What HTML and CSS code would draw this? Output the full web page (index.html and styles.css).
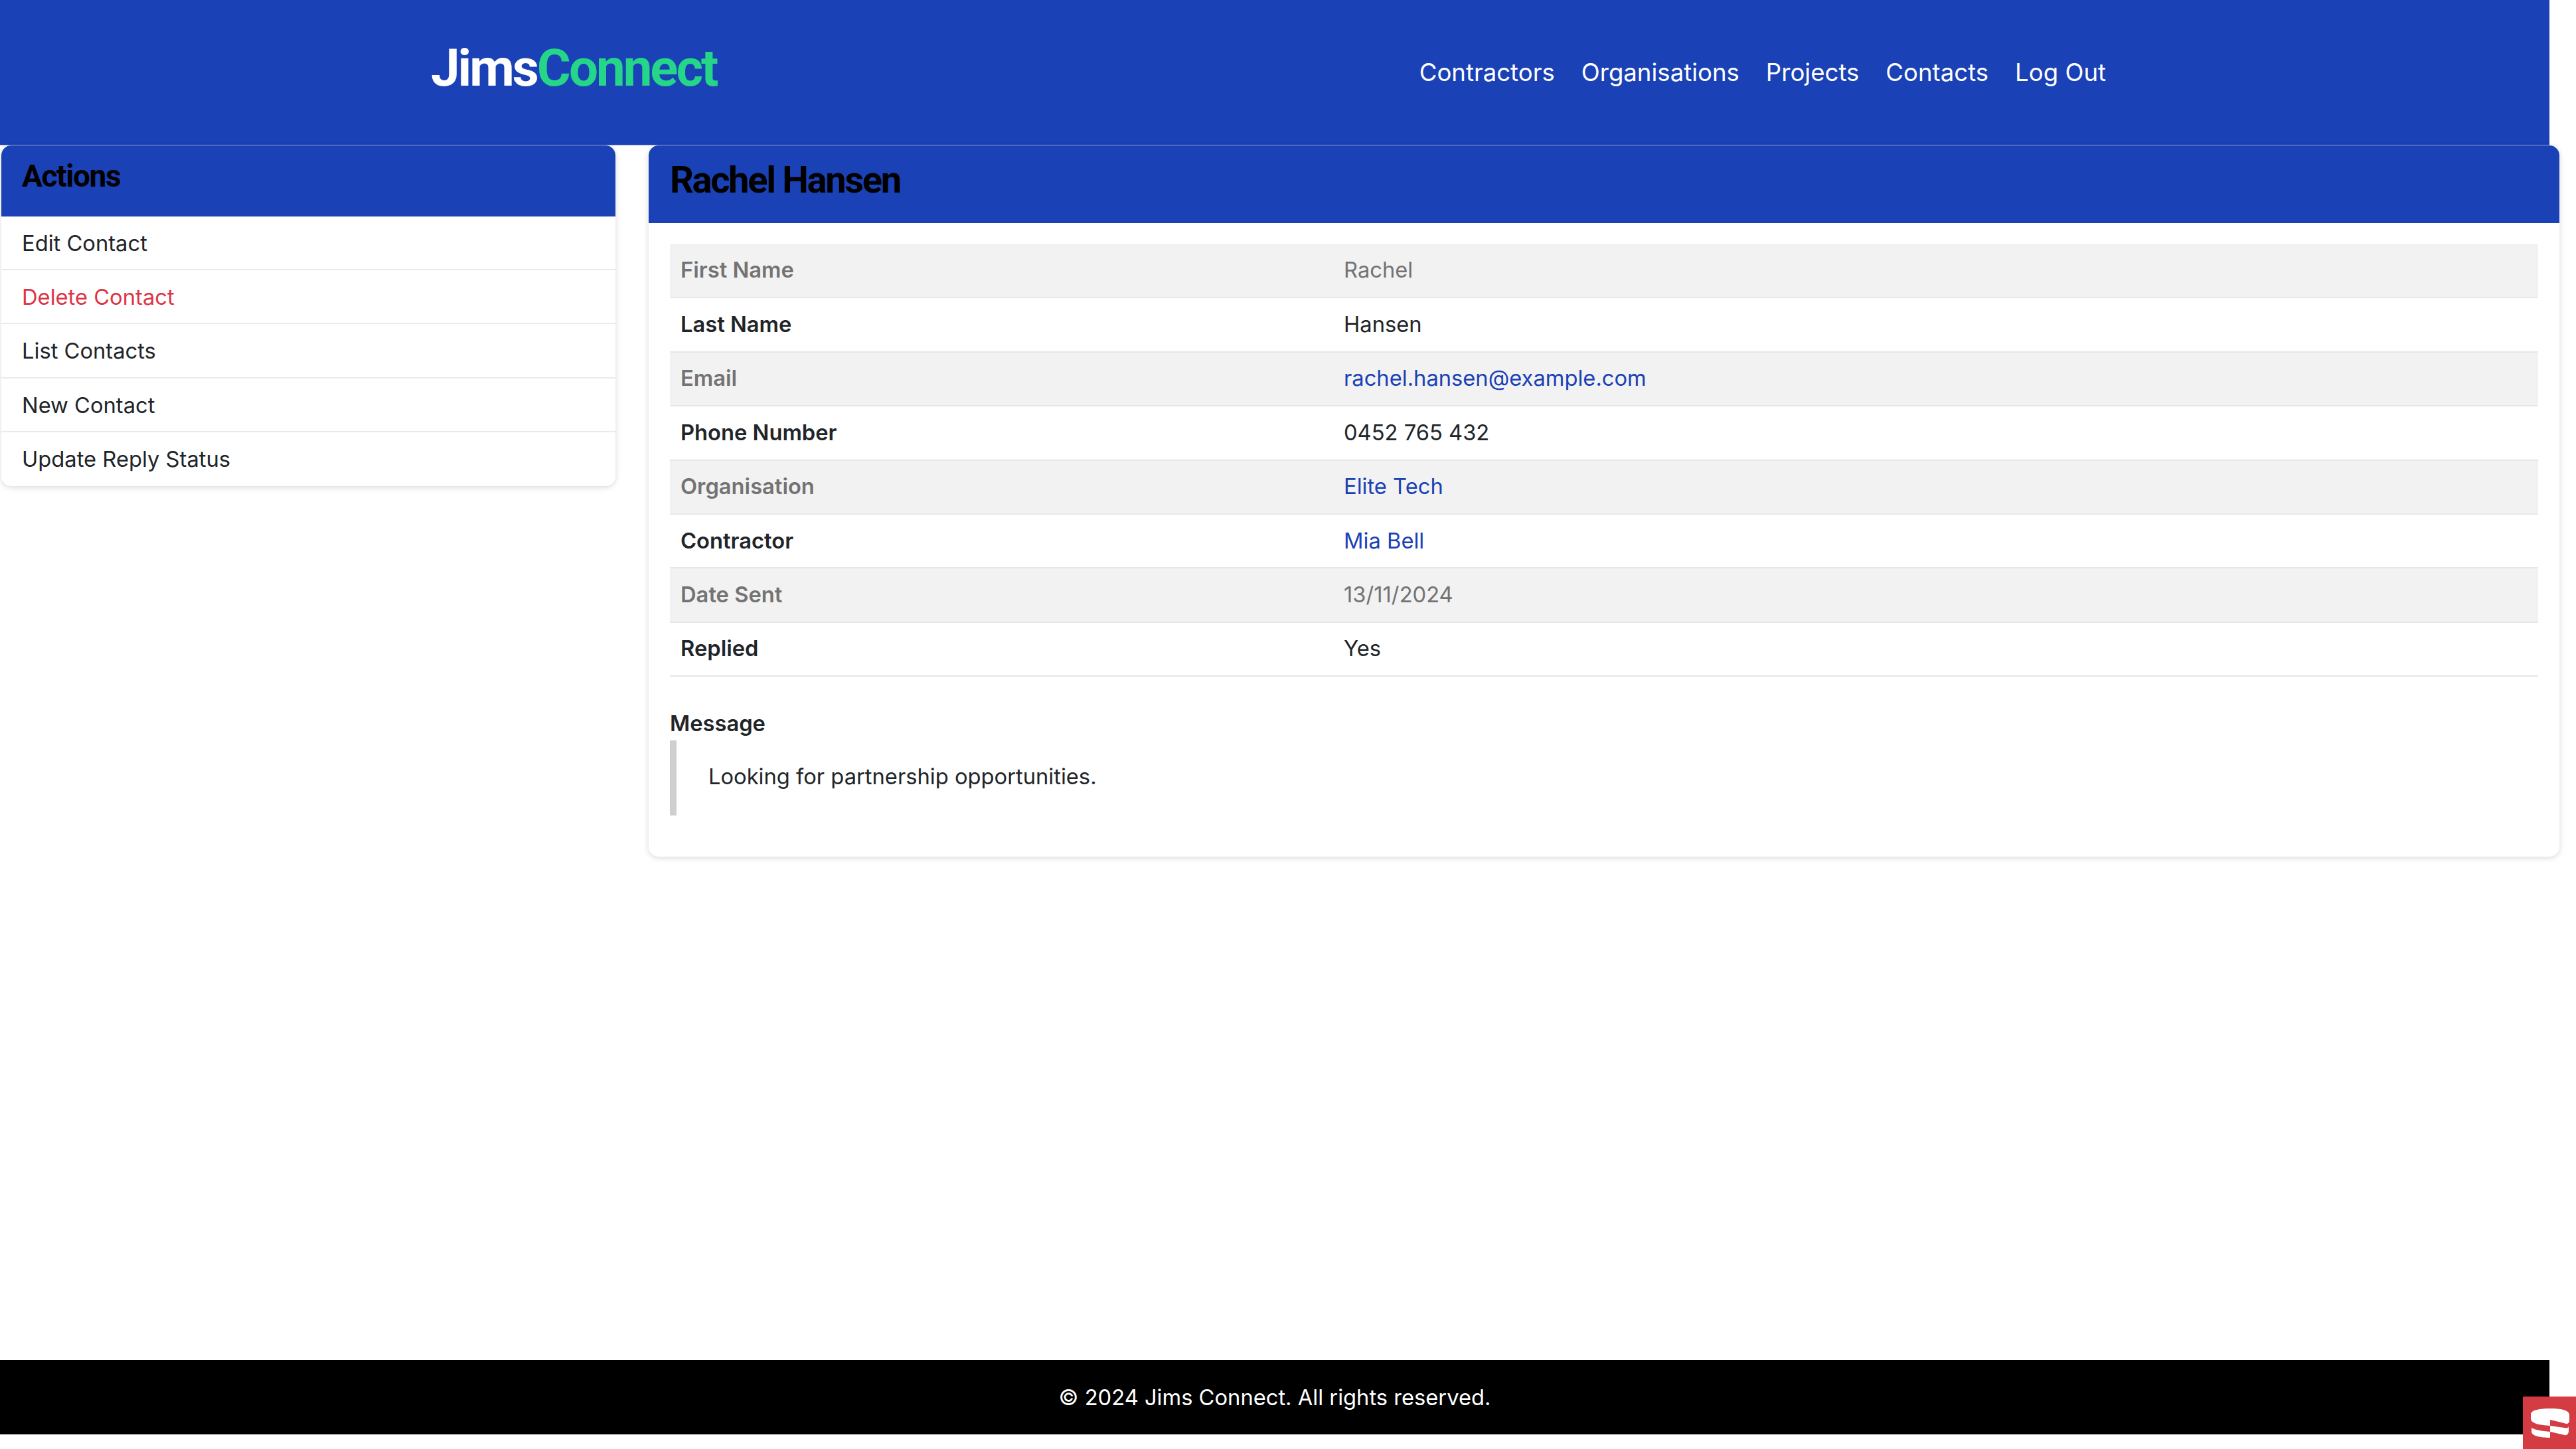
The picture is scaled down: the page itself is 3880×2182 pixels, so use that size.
FILE: index.html
```html
<!DOCTYPE html>

<html lang="en">
    <head>
        <title>Rachel Hansen - Jims Connect</title>

        <link rel="stylesheet" href="styles.css">
    </head>

    <body>
        <header class="top-bar">
            <div class="top-inner">
                <a class="logo"><span class="logo-jims">Jims</span><span class="logo-connect">Connect</span></a>
                <nav class="top-nav">
                    <a>Contractors</a>
                    <a>Organisations</a>
                    <a>Projects</a>
                    <a>Contacts</a>
                    <a>Log Out</a>
                </nav>
            </div>
        </header>

        <main class="layout">
            <aside class="card side-card">
                <h4 class="side-title">Actions</h4>
                <ul class="side-list">
                    <li>Edit Contact</li>
                    <li class="danger">Delete Contact</li>
                    <li>List Contacts</li>
                    <li>New Contact</li>
                    <li>Update Reply Status</li>
                </ul>
            </aside>

            <section class="card detail-card">
                <h3 class="detail-title">Rachel Hansen</h3>
                <div class="detail-body">
                    <table class="detail-table">
                        <tr><th>First Name</th><td>Rachel</td></tr>
                        <tr><th>Last Name</th><td>Hansen</td></tr>
                        <tr><th>Email</th><td><a>rachel.hansen@example.com</a></td></tr>
                        <tr><th>Phone Number</th><td>0452 765 432</td></tr>
                        <tr><th>Organisation</th><td><a>Elite Tech</a></td></tr>
                        <tr><th>Contractor</th><td><a>Mia Bell</a></td></tr>
                        <tr><th>Date Sent</th><td>13/11/2024</td></tr>
                        <tr><th>Replied</th><td>Yes</td></tr>
                    </table>

                    <div class="message">
                        <strong>Message</strong>
                        <blockquote><p>Looking for partnership opportunities.</p></blockquote>
                    </div>
                </div>
            </section>
        </main>

        <footer class="bottom-bar">
            <p>© 2024 Jims Connect. All rights reserved.</p>
        </footer>

        <div class="debug-toggle">
            <svg viewBox="0 0 80 80" width="80" height="80">
                <path fill="#fff" d="M12 27C12 20 26 18 41 18C56 18 70 20 70 28L70 36C70 41 66 42 62 40L41 35L41 44C26 43 12 41 12 33Z"/>
                <path fill="#fff" d="M41 44L62 47C66 48 69 47 69 45L69 52C69 56 66 59 63 58L41 53Z"/>
                <path fill="#fff" d="M13 47C17 50 28 52 41 53L41 62C26 62 13 59 13 53Z"/>
            </svg>
        </div>
    </body>
</html>
```
FILE: styles.css
```css
html, body {
    margin: 0;
    padding: 0;
    background: #fff;
}

body {
    position: relative;
    width: 3880px;
    height: 2182px;
    overflow: hidden;
    font-family: Inter, "Liberation Sans", sans-serif;
    font-size: 32.7px;
    color: #212529;
    display: flex;
    flex-direction: column;
}

.top-bar {
    width: 3840px;
    height: 218px;
    background: #1a41b5;
    border-bottom: 1px solid #9db0e0;
}

.top-inner {
    width: 2550px;
    margin: 0 auto;
    height: 100%;
    display: flex;
    align-items: center;
    justify-content: space-between;
}

.logo {
    font-family: Roboto, sans-serif;
    font-weight: 700;
    font-size: 78px;
    letter-spacing: -3px;
    padding-left: 4px;
    padding-bottom: 14px;
}

.logo-jims {
    color: #fff;
}

.logo-connect {
    color: #25d588;
}

.top-nav {
    display: flex;
    gap: 40px;
    font-size: 36.6px;
    color: #fff;
    padding-right: 23px;
    padding-bottom: 1px;
}

.layout {
    width: 3855px;
    flex: 1;
    box-sizing: border-box;
    padding-left: 2px;
    display: flex;
    align-items: flex-start;
    gap: 50px;
}

.card {
    background: #fff;
    border-radius: 15px;
    box-shadow: 0 2px 10px rgba(0, 0, 0, 0.15);
    overflow: hidden;
}

.side-card {
    width: 925px;
    flex-shrink: 0;
}

.side-title {
    margin: 0;
    height: 107px;
    box-sizing: border-box;
    padding: 19px 31px 0;
    background: #1a41b5;
    color: #000;
    font-family: Roboto, sans-serif;
    font-weight: 700;
    font-size: 46px;
    letter-spacing: -1.4px;
}

.side-list {
    list-style: none;
    margin: 0;
    padding: 0;
}

.side-list li {
    height: 81.2px;
    box-sizing: border-box;
    padding: 20px 31px 0;
    border-bottom: 2px solid #eaeaea;
}

.side-list li:last-child {
    border-bottom: 0;
}

.danger {
    color: #dc3545;
}

.detail-card {
    flex: 1;
}

.detail-title {
    margin: 0;
    height: 117px;
    box-sizing: border-box;
    padding: 19px 32px 0;
    background: #1a41b5;
    color: #000;
    font-family: Roboto, sans-serif;
    font-weight: 700;
    font-size: 56px;
    letter-spacing: -2.3px;
}

.detail-body {
    padding: 31px 32px 62px;
}

.detail-table {
    width: 100%;
    border-collapse: collapse;
}

.detail-table tr {
    height: 81.4px;
    border-bottom: 2px solid #e5e7eb;
}

.detail-table tr:nth-child(odd) {
    background: #f2f2f2;
    color: #737373;
}

.detail-table th {
    width: 967px;
    padding: 0 16px 2px;
    text-align: left;
    font-weight: 600;
}

.detail-table td {
    padding: 0 16px 2px;
}

.detail-table a {
    color: #1a41b5;
}

.message {
    margin-top: 50px;
}

.message strong {
    font-weight: 600;
}

.message blockquote {
    margin: 6px 0 0;
    height: 113px;
    box-sizing: border-box;
    padding: 34px 48px;
    border-left: 10px solid #cfcfcf;
}

.message p {
    margin: 0;
}

.bottom-bar {
    width: 3840px;
    height: 112px;
    margin-bottom: 22px;
    background: #000;
    color: #fff;
    display: flex;
    align-items: center;
    justify-content: center;
}

.bottom-bar p {
    margin: 0;
}

.debug-toggle {
    position: absolute;
    right: 0;
    bottom: 0;
    width: 80px;
    height: 79px;
    background: #d33c43;
}

.debug-toggle svg {
    display: block;
    filter: blur(0.7px);
}
```
